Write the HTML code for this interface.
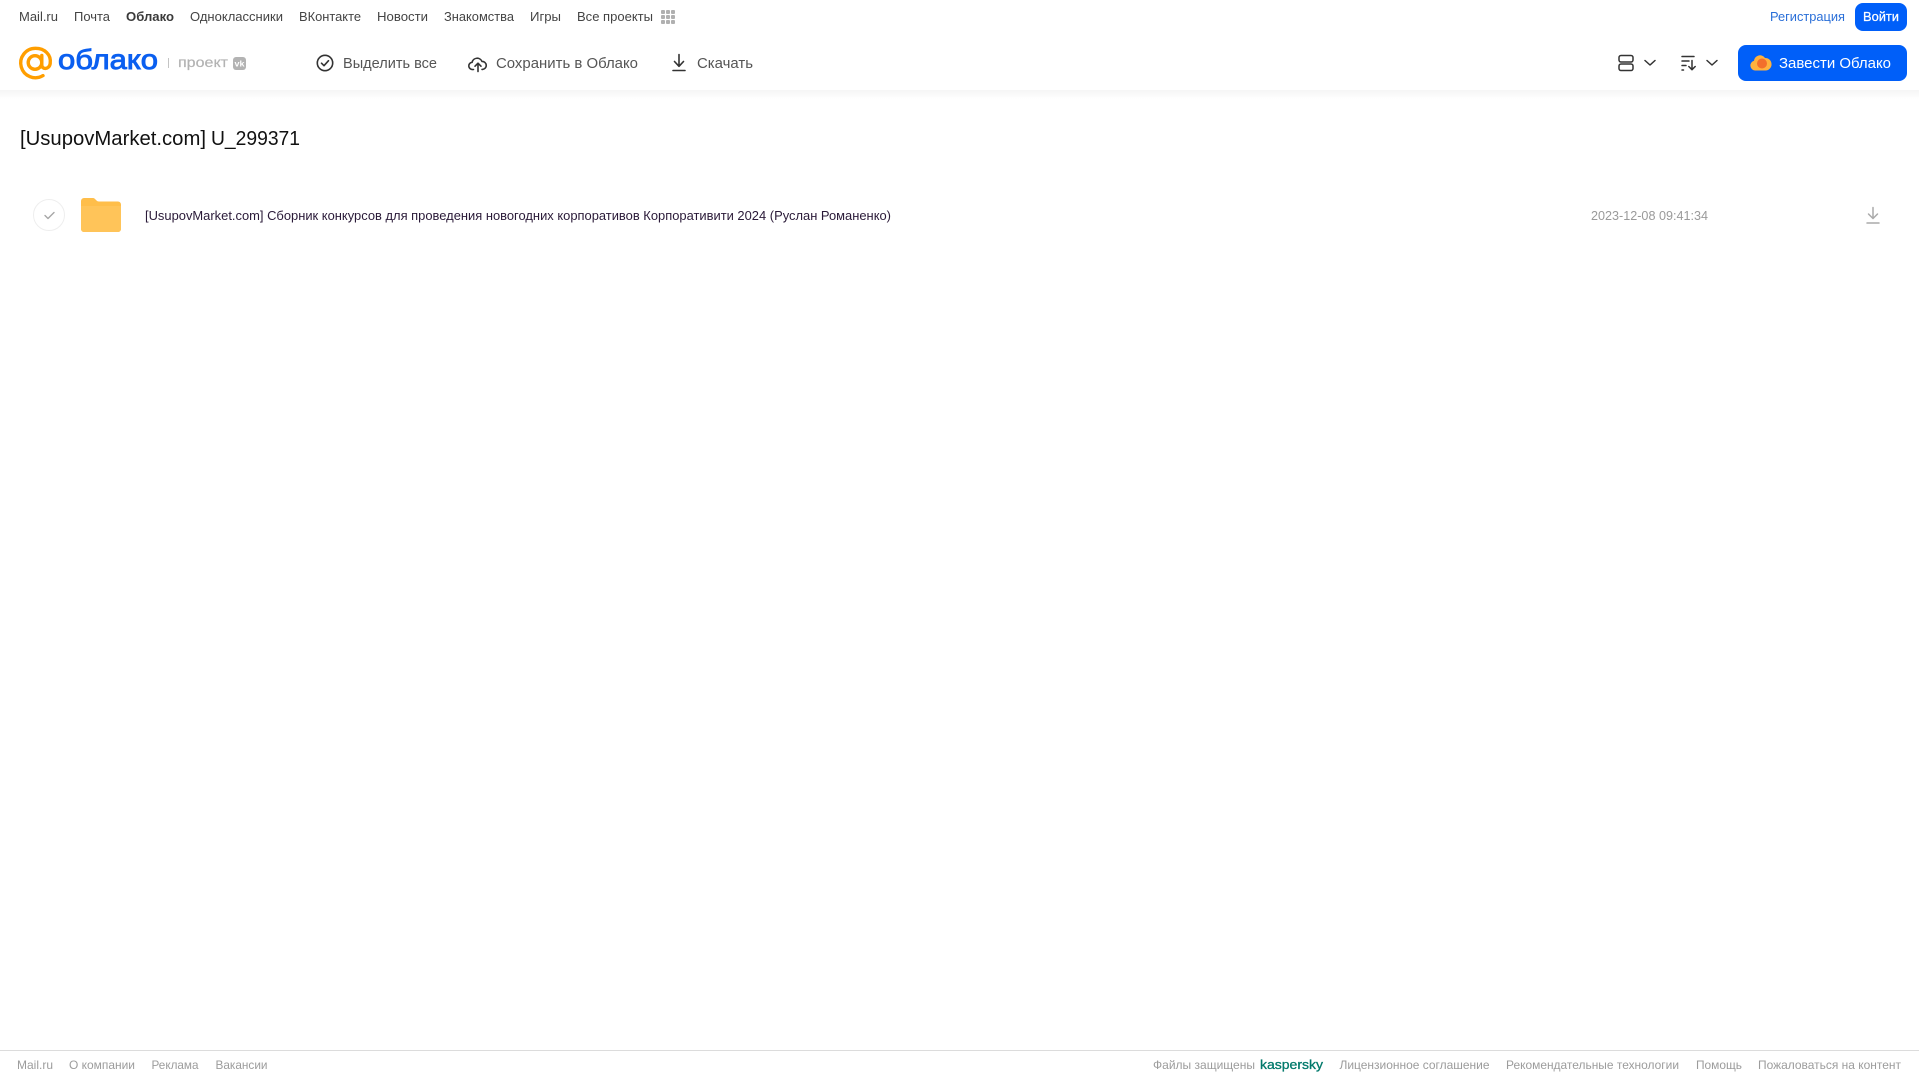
<!DOCTYPE html>
<html lang="ru">
<head>
<meta charset="utf-8">
<title>Облако</title>
<style>
html,body{margin:0;padding:0;background:#fff;width:1919px;height:1079px;overflow:hidden}
svg{display:block;position:absolute;left:0;top:0}
text{font-family:"Liberation Sans",Arial,sans-serif}
.n{font-size:13px;fill:#444}
.t{font-size:15px;fill:#555}
.f{font-size:12px;fill:#9c9c9c}
</style>
</head>
<body>
<svg width="1919" height="1079" viewBox="0 0 1919 1079" xmlns="http://www.w3.org/2000/svg">
<defs>
<linearGradient id="sh" x1="0" y1="0" x2="0" y2="1"><stop offset="0" stop-color="#000" stop-opacity=".04"/><stop offset="1" stop-color="#000" stop-opacity="0"/></linearGradient>
</defs>
<rect x="0" y="90" width="1919" height="9" fill="url(#sh)"/>

<!-- top nav -->
<text class="n" x="19" y="21" textLength="39" lengthAdjust="spacingAndGlyphs">Mail.ru</text>
<text class="n" x="74" y="21" textLength="36" lengthAdjust="spacingAndGlyphs">Почта</text>
<text class="n" x="126" y="21" textLength="48" lengthAdjust="spacingAndGlyphs" font-weight="700" style="fill:#3a3a3a">Облако</text>
<text class="n" x="190" y="21" textLength="93" lengthAdjust="spacingAndGlyphs">Одноклассники</text>
<text class="n" x="299" y="21" textLength="62" lengthAdjust="spacingAndGlyphs">ВКонтакте</text>
<text class="n" x="377" y="21" textLength="51" lengthAdjust="spacingAndGlyphs">Новости</text>
<text class="n" x="444" y="21" textLength="70" lengthAdjust="spacingAndGlyphs">Знакомства</text>
<text class="n" x="530" y="21" textLength="31" lengthAdjust="spacingAndGlyphs">Игры</text>
<text class="n" x="577" y="21" textLength="76" lengthAdjust="spacingAndGlyphs">Все проекты</text>
<g fill="#b0b0b0">
<rect x="661" y="10" width="4" height="4" rx="1"/><rect x="666" y="10" width="4" height="4" rx="1"/><rect x="671" y="10" width="4" height="4" rx="1"/>
<rect x="661" y="15" width="4" height="4" rx="1"/><rect x="666" y="15" width="4" height="4" rx="1"/><rect x="671" y="15" width="4" height="4" rx="1"/>
<rect x="661" y="20" width="4" height="4" rx="1"/><rect x="666" y="20" width="4" height="4" rx="1"/><rect x="671" y="20" width="4" height="4" rx="1"/>
</g>

<text x="1770" y="21" font-size="13" fill="#2a6fd8" textLength="75" lengthAdjust="spacingAndGlyphs">Регистрация</text>
<rect x="1855" y="3" width="52" height="28" rx="8" fill="#005ff9"/>
<text x="1863" y="21" font-size="13" fill="#fff" stroke="#fff" stroke-width=".25" textLength="36" lengthAdjust="spacingAndGlyphs">Войти</text>

<!-- logo -->
<g fill="none" stroke="#ff9e00" stroke-width="3.4" stroke-linecap="round">
<circle cx="35" cy="62.500" r="6.800"/>
<path d="M41.800 55.500v9.500c0 4.800 7.500 4.800 8.400-1.500 1.300-9-5.700-15.200-14.700-15.200a14.700 14.700 0 1 0 7.500 27.300"/>
</g>
<text x="58" y="69" font-size="27.500" fill="#0a5ff0" stroke="#0a5ff0" stroke-width=".9" textLength="100" lengthAdjust="spacingAndGlyphs">облако</text>
<rect x="168" y="58" width="1" height="10" fill="#c4c4c4"/>
<text x="178" y="67" font-size="14" fill="#b3b3b3" stroke="#b3b3b3" stroke-width=".2" textLength="50" lengthAdjust="spacingAndGlyphs">проект</text>
<rect x="233" y="57" width="13" height="13" rx="3" fill="#b3b3b3"/>
<text x="234.500" y="66.500" font-size="8" font-weight="700" fill="#fff" textLength="10" lengthAdjust="spacingAndGlyphs">vk</text>

<!-- toolbar -->
<g fill="none" stroke="#333" stroke-width="1.600" stroke-linecap="round" stroke-linejoin="round">
<circle cx="325" cy="63" r="7.700"/>
<path d="M321.500 63.200l2.500 2.500 4.500-5"/>
<path d="M473.500 69.500h-.8a3.600 3.600 0 0 1-.6-7.200 5.200 5.200 0 0 1 9.900-.8 3.900 3.900 0 0 1 .6 7.900h-.6"/>
<path d="M478 71.500v-8M475 66.200l3-3 3 3"/>
<path d="M679 54.500v11.500M674.500 61.500l4.500 4.800 4.500-4.800"/>
<path d="M673 70.500h12"/>
</g>
<text class="t" x="343" y="68" textLength="94" lengthAdjust="spacingAndGlyphs">Выделить все</text>
<text class="t" x="496" y="68" textLength="142" lengthAdjust="spacingAndGlyphs">Сохранить в Облако</text>
<text class="t" x="697" y="68" textLength="56" lengthAdjust="spacingAndGlyphs">Скачать</text>

<!-- right toolbar -->
<g fill="none" stroke="#333" stroke-width="1.500" stroke-linecap="round" stroke-linejoin="round">
<rect x="1619" y="55.500" width="14" height="6.500" rx="2"/>
<rect x="1619" y="64" width="14" height="6.500" rx="2"/>
<path d="M1645 60.500l5 4.500 5-4.500"/>
<path d="M1682 56.500h12M1682 61h7M1682 65.500h4M1682 70h1.500"/>
<path d="M1692 60.500v9M1688.800 66.500l3.200 3.200 3.200-3.200"/>
<path d="M1707 60.500l5 4.500 5-4.500"/>
</g>
<rect x="1738" y="45" width="169" height="36" rx="8" fill="#005ff9"/>
<path d="M1755 70.500a5 5 0 0 1-1-9.800 6 6 0 0 1 11-2.700 5.400 5.400 0 0 1 .6 12.500z" fill="#ffb23e"/>
<circle cx="1762" cy="63.500" r="5" fill="#f36f2c"/>
<text x="1779" y="68" font-size="15" fill="#fff" textLength="112" lengthAdjust="spacingAndGlyphs">Завести Облако</text>

<!-- title -->
<text x="20" y="145" font-size="20" fill="#111" textLength="186" lengthAdjust="spacingAndGlyphs">[UsupovMarket.com]</text>
<text x="211" y="145" font-size="20" fill="#111" textLength="89" lengthAdjust="spacingAndGlyphs">U_299371</text>

<!-- row -->
<circle cx="49" cy="215" r="15.500" fill="#fff" stroke="#eee" stroke-width="1"/>
<path d="M45 215.500l3 3 6-6" fill="none" stroke="#a6a6a6" stroke-width="1.400" stroke-linecap="round" stroke-linejoin="round"/>
<path d="M81 201a3 3 0 0 1 3-3h8.500c2 0 2.500 1 3.500 2s1.500 1.500 3 1.500h19a3 3 0 0 1 3 3V229a3 3 0 0 1-3 3H84a3 3 0 0 1-3-3z" fill="#ffbe4a"/>
<path d="M81 206h40v23a3 3 0 0 1-3 3H84a3 3 0 0 1-3-3z" fill="#ffc459"/>
<text x="145" y="220" font-size="13" fill="#2a1a38" textLength="746" lengthAdjust="spacingAndGlyphs">[UsupovMarket.com] Сборник конкурсов для проведения новогодних корпоративов Корпоративити 2024 (Руслан Романенко)</text>
<text x="1591" y="220" font-size="13" fill="#9a9a9a" textLength="117" lengthAdjust="spacingAndGlyphs">2023-12-08 09:41:34</text>
<g fill="none" stroke="#aaa" stroke-width="1.500" stroke-linecap="round" stroke-linejoin="round">
<path d="M1873 207.500v11M1868.500 214l4.500 4.500 4.500-4.500"/>
<path d="M1867 223h12"/>
</g>

<!-- footer -->
<rect x="0" y="1050" width="1919" height="1" fill="#dcdcdc"/>
<text class="f" x="17" y="1069" textLength="36" lengthAdjust="spacingAndGlyphs">Mail.ru</text>
<text class="f" x="69" y="1069" textLength="66" lengthAdjust="spacingAndGlyphs">О компании</text>
<text class="f" x="151.500" y="1069" textLength="47" lengthAdjust="spacingAndGlyphs">Реклама</text>
<text class="f" x="215.500" y="1069" textLength="52" lengthAdjust="spacingAndGlyphs">Вакансии</text>
<text class="f" x="1153" y="1069" textLength="102" lengthAdjust="spacingAndGlyphs">Файлы защищены</text>
<text x="1260" y="1069" font-size="13" fill="#00796b" stroke="#00796b" stroke-width=".3" textLength="63" lengthAdjust="spacingAndGlyphs">kaspersky</text>
<text class="f" x="1339.500" y="1069" textLength="150" lengthAdjust="spacingAndGlyphs">Лицензионное соглашение</text>
<text class="f" x="1506" y="1069" textLength="173" lengthAdjust="spacingAndGlyphs">Рекомендательные технологии</text>
<text class="f" x="1696" y="1069" textLength="46" lengthAdjust="spacingAndGlyphs">Помощь</text>
<text class="f" x="1758" y="1069" textLength="143" lengthAdjust="spacingAndGlyphs">Пожаловаться на контент</text>
</svg>
</body>
</html>
